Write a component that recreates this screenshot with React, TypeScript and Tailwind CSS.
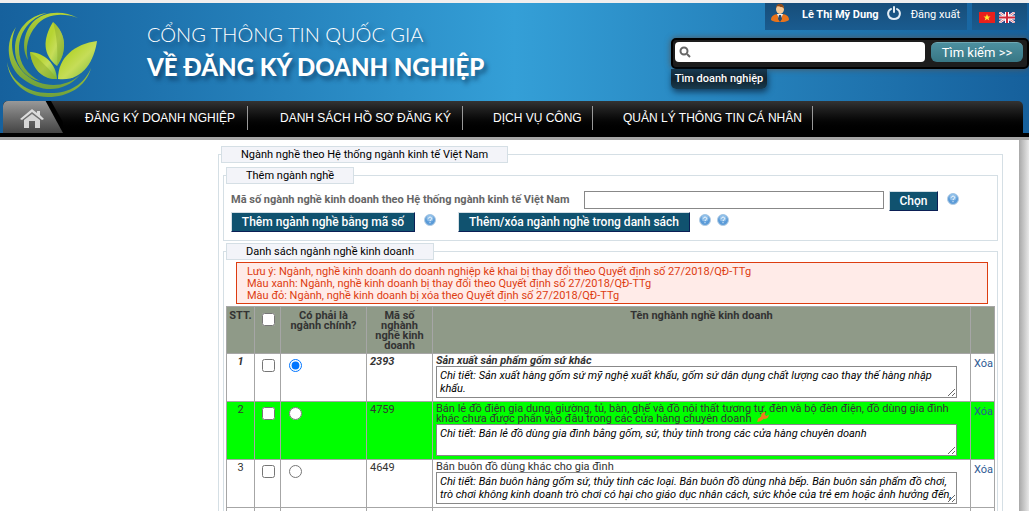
import { ReactNode } from "react";
import clsx from "clsx";

interface Industry {
  code: string;
  name: string;
  detail: string;
  main?: boolean;
  changed?: boolean;
}

const NAV_ITEMS = [
  { label: "ĐĂNG KÝ DOANH NGHIỆP", className: "w-[185px] pl-[22px]" },
  { label: "DANH SÁCH HỒ SƠ ĐĂNG KÝ", className: "w-[215px] pl-[32px]" },
  { label: "DỊCH VỤ CÔNG", className: "w-[130px] pl-[30px]" },
  { label: "QUẢN LÝ THÔNG TIN CÁ NHÂN", className: "w-[220px] pl-[30px]" },
];

const NOTES = [
  "Lưu ý: Ngành, nghề kinh doanh do doanh nghiệp kê khai bị thay đổi theo Quyết định số 27/2018/QĐ-TTg",
  "Màu xanh: Ngành, nghề kinh doanh bị thay đổi theo Quyết định số 27/2018/QĐ-TTg",
  "Màu đỏ: Ngành, nghề kinh doanh bị xóa theo Quyết định số 27/2018/QĐ-TTg",
];

const INDUSTRIES: Industry[] = [
  {
    code: "2393",
    name: "Sản xuất sản phẩm gốm sứ khác",
    detail:
      "Chi tiết: Sản xuất hàng gốm sứ mỹ nghệ xuất khẩu, gốm sứ dân dụng chất lượng cao thay thế hàng nhập khẩu.",
    main: true,
  },
  {
    code: "4759",
    name: "Bán lẻ đồ điện gia dụng, giường, tủ, bàn, ghế và đồ nội thất tương tự, đèn và bộ đèn điện, đồ dùng gia đình khác chưa được phân vào đâu trong các cửa hàng chuyên doanh",
    detail:
      "Chi tiết: Bán lẻ đồ dùng gia đình bằng gốm, sứ, thủy tinh trong các cửa hàng chuyên doanh",
    changed: true,
  },
  {
    code: "4649",
    name: "Bán buôn đồ dùng khác cho gia đình",
    detail:
      "Chi tiết: Bán buôn hàng gốm sứ, thủy tinh các loại. Bán buôn đồ dùng nhà bếp. Bán buôn sản phẩm đồ chơi, trò chơi không kinh doanh trò chơi có hại cho giáo dục nhân cách, sức khỏe của trẻ em hoặc ảnh hưởng đến,",
  },
];

function Logo() {
  return (
    <svg viewBox="2 8 100 92" className="h-[92px] w-[100px] shrink-0">
      <defs>
        <linearGradient id="leaf" x1="0" y1="0" x2="1" y2="1">
          <stop offset="0.3" stopColor="#b6d432" />
          <stop offset="0.55" stopColor="#c6dd58" />
          <stop offset="1" stopColor="#72b63c" />
        </linearGradient>
        <linearGradient id="ring" x1="0" y1="0" x2="0" y2="1">
          <stop offset="0" stopColor="#b5d334" />
          <stop offset="1" stopColor="#6fa03c" />
        </linearGradient>
      </defs>
      <g fill="url(#ring)">
        <path d="M78 18 C62 12 45 14 36 26 C28 35 25 48 28 60 C21 48 24 32 33 22 C44 11 63 10 78 18Z" />
        <path d="M47 13 C30 18 19 32 19 49 C19 64 28 75 40 81 C25 78 15 65 15 49 C15 30 29 15 47 13Z" />
        <path d="M16 27 C9 42 11 60 25 74 C41 88 64 89 80 75 C64 93 41 93 23 79 C6 66 5 42 16 27Z" />
        <path d="M7 62 C10 80 27 93 48 93 C68 94 84 85 91 68 C86 87 68 97 48 97 C26 97 9 82 7 62Z" />
      </g>
      <g fill="url(#leaf)">
        <path d="M53 22 C67 34 67 52 57 66 C43 55 42 40 53 22Z" />
        <path d="M30 52 C45 53 56 64 57 79 C43 80 32 69 30 52Z" />
        <path d="M97 41 C75 44 58 57 58 79 C82 82 94 62 97 41Z" />
      </g>
      <g fill="#8fae2c" opacity="0.5">
        <path d="M53 22 C67 34 67 52 57 66 C58 50 57 36 53 22Z" />
        <path d="M30 52 C32 69 43 80 57 79 C50 70 41 60 30 52Z" />
      </g>
    </svg>
  );
}

function UserIcon() {
  return (
    <svg viewBox="0 0 18 19" className="h-[19px] w-[18px]">
      <path d="M0 17 C0 12 4 11 9 11 C14 11 18 12 18 17 C14 20 4 20 0 17Z" fill="#e8731b" />
      <path d="M6 11 L9 18 L12 11Z" fill="#eef2f6" />
      <path d="M8 12 h2 l1 4 -2 3 -2 -3Z" fill="#27496b" />
      <ellipse cx="9" cy="6" rx="4" ry="5" fill="#f6c793" />
      <path d="M5 6 C4 -1 14 -1 13 6 C12 3 9 5 7 3 C6 4 5 4 5 6Z" fill="#8a4a1d" />
    </svg>
  );
}

function PowerIcon() {
  return (
    <svg
      viewBox="0 0 14 14"
      className="h-[14px] w-[14px]"
      fill="none"
      stroke="#e3edf5"
      strokeWidth="2"
      strokeLinecap="round"
    >
      <path d="M7 1 V6" />
      <path d="M4 3 C-1 6 1 13 7 13 C13 13 15 6 10 3" />
    </svg>
  );
}

function VietnamFlag() {
  return (
    <svg viewBox="0 0 16 11" className="h-[11px] w-4">
      <rect width="16" height="11" fill="#e8201c" />
      <path d="M8 2 L9 4.5 H11.5 L9.5 6 L10.3 8.5 L8 7 L5.7 8.5 L6.5 6 L4.5 4.5 H7Z" fill="#ffe92c" />
    </svg>
  );
}

function BritishFlag() {
  return (
    <svg viewBox="0 0 16 11" className="h-[11px] w-4">
      <rect width="16" height="11" fill="#2c3f86" />
      <path d="M0 0 L16 11 M16 0 L0 11" stroke="#fff" strokeWidth="2.4" />
      <path d="M0 0 L16 11 M16 0 L0 11" stroke="#d8505c" strokeWidth="0.8" />
      <path d="M8 0 V11 M0 5.5 H16" stroke="#fff" strokeWidth="4" />
      <path d="M8 0 V11 M0 5.5 H16" stroke="#d0273a" strokeWidth="2" />
    </svg>
  );
}

function HelpIcon({ className }: { className?: string }) {
  return (
    <svg viewBox="0 0 12 12" className={clsx("h-3 w-3 shrink-0", className)}>
      <circle cx="6" cy="6" r="5.5" fill="#5b9bd8" stroke="#b5cde3" />
      <circle cx="6" cy="4" r="3.5" fill="#8fbfe9" />
      <path
        d="M4.3 4.6 C4.5 2.6 7.8 2.7 7.7 4.6 C7.6 5.8 6 5.8 6 7 M6 8.2 V9.2"
        fill="none"
        stroke="#fff"
      />
    </svg>
  );
}

function HomeIcon() {
  return (
    <svg viewBox="0 0 24 20" className="h-5 w-6">
      <path
        d="M12 0 L0 10 L2 11 L12 3 L22 11 L24 10 L20 6 V2 H17 V4Z"
        fill="#dcdcdc"
      />
      <path d="M12 5 L4 11 V19 H9 V12 H15 V19 H20 V11Z" fill="#d6d6d6" />
    </svg>
  );
}

function TopBar() {
  return (
    <div className="flex h-[27px] gap-[5px] pr-[2px] text-[11px] leading-4 whitespace-nowrap text-white">
      <div className="flex w-[202px] bg-linear-to-b from-[#174d79] to-[#1a5c90] pl-[6px]">
        <UserIcon />
        <a href="#" className="ml-[13px] pt-[4px] font-bold">
          Lê Thị Mỹ Dung
        </a>
        <div className="ml-[8px] pt-[3px]">
          <PowerIcon />
        </div>
        <a href="#" className="ml-[10px] pt-[4px]">
          Đăng xuất
        </a>
      </div>
      <div className="flex w-[55px] gap-1 bg-linear-to-b from-[#174d79] to-[#1a5c90] pt-[9px] pl-[7px]">
        <VietnamFlag />
        <BritishFlag />
      </div>
    </div>
  );
}

function SearchBox() {
  return (
    <div className="mt-[8px] w-[358px] text-white">
      <div className="flex h-[31px] items-start gap-[6px] rounded-[5px] border-2 border-black bg-[#1d1d1d] pt-[2px] pr-[4px] pl-[2px] shadow-[0_0_6px_#555]">
        <label className="flex h-[20px] flex-1 items-center rounded-[4px] bg-white pl-1">
          <svg viewBox="0 0 12 12" className="h-3 w-3" fill="none" stroke="#666">
            <circle cx="5" cy="5" r="3.5" strokeWidth="2" />
            <path d="M8 8 L11 11" strokeWidth="2" />
          </svg>
          <input
            type="text"
            aria-label="Tìm kiếm"
            className="min-w-0 flex-1 px-1 text-[12px] text-black outline-none"
          />
        </label>
        <button
          type="button"
          className="h-[20px] w-[92px] rounded-[6px] border-t border-[#6fa9b5] bg-linear-to-b from-[#4c8f9f] to-[#387785] text-[13px] leading-[18px]"
        >
          Tìm kiếm &gt;&gt;
        </button>
      </div>
      <div className="flex h-[20px] w-[96px] items-center justify-center rounded-b-[5px] bg-linear-to-b from-[#173a52] via-[#11232f] to-[#173b4f] text-[11px] font-medium whitespace-nowrap shadow-[1px_3px_6px_#123c5e]">
        Tìm doanh nghiệp
      </div>
    </div>
  );
}

function Header() {
  return (
    <header className="border-t-[3px] border-[#f0eeee] bg-linear-to-r from-[#16619d] via-[#349fd7] via-50% to-[#16609c]">
      <div className="flex h-[98px] justify-between">
        <div className="flex pt-[5px]">
          <div className="pl-[2px]">
            <Logo />
          </div>
          <div className="pt-[12px] pl-[45px] font-['Lato'] text-white [text-shadow:3px_4px_4px_rgba(0,30,60,0.5)]">
            <div className="text-[20px] leading-[28px] font-light">
              CỔNG THÔNG TIN QUỐC GIA
            </div>
            <div className="text-[24px] leading-[38px] font-black">
              VỀ ĐĂNG KÝ DOANH NGHIỆP
            </div>
          </div>
        </div>
        <div className="flex flex-col items-end">
          <TopBar />
          <SearchBox />
        </div>
      </div>
      <nav className="mr-[6px] ml-[3px] flex h-8 rounded-t-[5px] bg-linear-to-b from-[#333] to-black">
        <div className="w-[60px] rounded-tl-[5px] bg-black [clip-path:polygon(0_0,80%_0,110%_100%,0_100%)]">
          <a
            href="#"
            aria-label="Trang chủ"
            className="flex h-8 items-center rounded-tl-[5px] bg-linear-to-b from-[#999] to-[#444] pt-1 pl-[17px] [clip-path:polygon(0_0,71%_0,100%_100%,0_100%)]"
          >
            <HomeIcon />
          </a>
        </div>
        {NAV_ITEMS.map((item) => (
          <a
            key={item.label}
            href="#"
            className={clsx(
              "mt-[5px] h-6 border-r border-[#999] font-['Liberation_Sans'] text-[12px] leading-6 whitespace-nowrap text-white",
              item.className
            )}
          >
            {item.label}
          </a>
        ))}
      </nav>
      <div className="h-[7px] border-b-[3px] border-[#a6a6a6] bg-black" />
    </header>
  );
}

function Panel({
  title,
  className,
  children,
}: {
  title: string;
  className?: string;
  children: ReactNode;
}) {
  return (
    <fieldset className={clsx("min-w-0 border border-[#d5dfe5]", className)}>
      <legend className="ml-[2px] h-[17px] border border-[#d5dfe5] bg-[#f3f4f9] px-[19px] text-[11px] leading-4 text-black">
        {title}
      </legend>
      {children}
    </fieldset>
  );
}

function ActionButton({
  className,
  children,
}: {
  className?: string;
  children: string;
}) {
  return (
    <button
      type="button"
      className={clsx(
        "h-[20px] border border-t-[#d5dfe5] border-r-[#0b1f55] border-b-[#0b1f55] border-l-[#d5dfe5] bg-[#10526f] text-[12px] leading-[18px] font-medium whitespace-nowrap text-white",
        className
      )}
    >
      {children}
    </button>
  );
}

function AddIndustry() {
  return (
    <Panel title="Thêm ngành nghề" className="h-[74px]">
      <div className="flex pt-[7px] pl-[7px]">
        <label
          htmlFor="code"
          className="w-[349px] pt-[2px] text-[11px] leading-[13px] font-bold whitespace-nowrap text-[#666]"
        >
          Mã số ngành nghề kinh doanh theo Hệ thống ngành kinh tế Việt Nam
        </label>
        <input id="code" type="text" className="ml-1 h-[18px] w-[300px] border border-[#888] px-1" />
        <ActionButton className="ml-[5px] w-[49px]">Chọn</ActionButton>
        <HelpIcon className="ml-[9px] mt-[2px]" />
      </div>
      <div className="flex pt-px pl-[7px]">
        <ActionButton className="w-[184px]">Thêm ngành nghề bằng mã số</ActionButton>
        <HelpIcon className="ml-[9px] mt-[2px]" />
        <ActionButton className="ml-[22px] w-[232px]">
          Thêm/xóa ngành nghề trong danh sách
        </ActionButton>
        <HelpIcon className="ml-[9px] mt-[2px]" />
        <HelpIcon className="ml-[6px] mt-[2px]" />
      </div>
    </Panel>
  );
}

function IndustryRow({ item, index }: { item: Industry; index: number }) {
  return (
    <tr
      className={clsx(
        "align-top [&>td]:border [&>td]:border-[#a6a6a6]",
        item.changed ? "h-[58px] bg-[#00ff00]" : "h-12",
        item.main && "font-bold italic"
      )}
    >
      <td className="pt-[3px] text-center">{index}</td>
      <td className="pt-[5px] pl-[7px]">
        <input type="checkbox" aria-label={`Chọn ngành ${item.code}`} className="block h-[13px] w-[13px]" />
      </td>
      <td className="pt-[5px] pl-[8px]">
        <input
          type="radio"
          name="main"
          defaultChecked={item.main}
          aria-label={`Ngành chính ${item.code}`}
          className="block h-[13px] w-[13px]"
        />
      </td>
      <td className="pt-[3px] pl-[3px]">{item.code}</td>
      <td className="pt-[2px] pl-[3px]">
        {item.name}
        {item.changed && (
          <svg viewBox="0 0 14 12" className="-mt-1 ml-[5px] inline h-[10px] w-[14px]">
            <path d="M0 12 L1 8 L5 5 C4 2 7 0 10 0 L9 3 L11 5 L14 3 C14 7 11 9 8 8 L4 11Z" fill="#ed7d1c" />
          </svg>
        )}
        <textarea
          aria-label={`Chi tiết ${item.code}`}
          defaultValue={item.detail}
          className="block h-8 w-[521px] overflow-hidden border border-[#888] bg-white px-[3px] py-[2px] text-[11px] leading-[13px] font-normal text-black italic"
        />
      </td>
      <td className="pt-[3px] pl-[3px] leading-[13px] font-normal text-[#2e5a93] not-italic">
        <a href="#">Xóa</a>
      </td>
    </tr>
  );
}

function IndustryTable() {
  return (
    <div className="px-[2px] pt-[2px]">
      <table className="w-full table-fixed border-collapse text-[11px] leading-[10px] text-[#333]">
        <colgroup>
          <col className="w-[28px]" />
          <col className="w-[26px]" />
          <col className="w-[86px]" />
          <col className="w-[66px]" />
          <col />
          <col className="w-[24px]" />
        </colgroup>
        <thead>
          <tr className="h-[47px] bg-[#8f9a88] align-top [&>th]:border [&>th]:border-[#a6a6a6] [&>th]:pt-[4px]">
            <th>STT.</th>
            <th className="pl-[7px]">
              <input type="checkbox" aria-label="Chọn tất cả" className="mt-[2px] block h-[13px] w-[13px]" />
            </th>
            <th className="px-1">Có phải là ngành chính?</th>
            <th className="px-1">Mã số nghành nghề kinh doanh</th>
            <th>Tên nghành nghề kinh doanh</th>
            <th />
          </tr>
        </thead>
        <tbody>
          {INDUSTRIES.map((item, i) => (
            <IndustryRow key={item.code} item={item} index={i + 1} />
          ))}
          {/* blank row for the next entry */}
          <tr className="h-12 [&>td]:border [&>td]:border-[#a6a6a6]">
            <td />
            <td />
            <td />
            <td />
            <td />
            <td />
          </tr>
        </tbody>
      </table>
    </div>
  );
}

export default function App() {
  return (
    <div className="flex h-screen flex-col overflow-hidden bg-white font-['Roboto',sans-serif]">
      <Header />
      <div className="flex min-h-0 flex-1">
        <main className="min-w-0 flex-1 pt-[6px] pr-[16px] pl-[218px]">
          <Panel title="Ngành nghề theo Hệ thống ngành kinh tế Việt Nam">
            <div className="flex flex-col gap-[2px] px-1 pt-[4px] pb-2">
              <AddIndustry />
              <Panel title="Danh sách ngành nghề kinh doanh" className="pb-2">
                <div className="mt-[2px] mr-[9px] ml-[12px] border border-[#dd3c10] bg-[#ffebe8] px-[10px] pt-[3px] pb-px text-[11px] leading-3 text-[#dd3c10]">
                  {NOTES.map((note) => (
                    <p key={note}>{note}</p>
                  ))}
                </div>
                <IndustryTable />
              </Panel>
            </div>
          </Panel>
        </main>
        <div className="w-[10px] bg-linear-to-r from-[#a8a8a8] to-[#e8e8e8]" />
      </div>
    </div>
  );
}
